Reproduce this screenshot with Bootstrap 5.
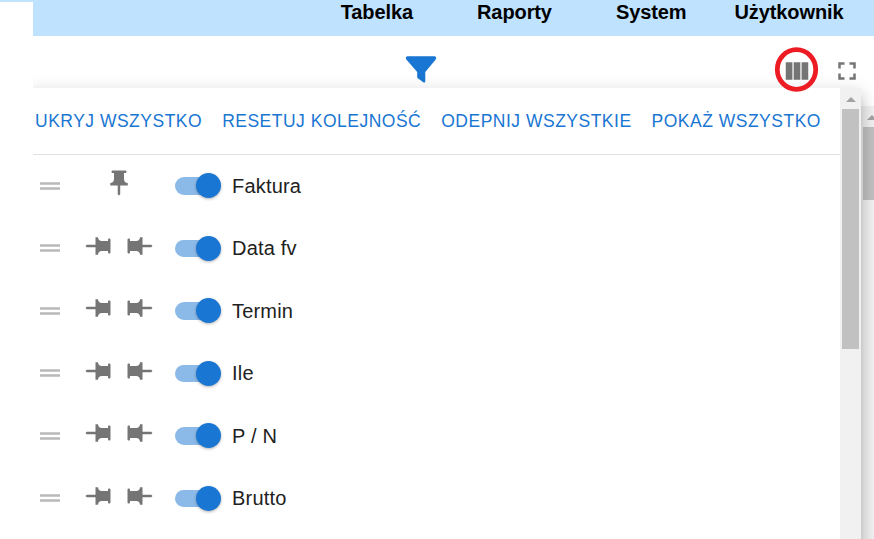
<!DOCTYPE html>
<html lang="pl">
<head>
<meta charset="utf-8">
<meta name="viewport" content="width=device-width, initial-scale=1">
<title>Tabelka</title>
<link href="https://cdn.jsdelivr.net/npm/bootstrap@5.3.0/dist/css/bootstrap.min.css" rel="stylesheet">
<style>
body{font-family:"Liberation Sans",Arial,sans-serif;font-size:20px;color:#212121;height:539px;background:#fff}
.side{width:33px;border-top:2px solid #bfe2ff}
.topnav{height:36px;background:#bfe2ff;padding-right:30.5px;gap:64px}
.topnav .nav-link{color:#000;font-weight:700;line-height:24px;padding:0;letter-spacing:-.1px}
.topnav .nav-link:last-child{margin-left:-16px}
.tools{height:52px;padding:9px 12px 0 0}
.tools svg{display:block}
.ic{width:30px;height:30px;fill:#757575;display:block;flex:none}
.funnel{margin-right:345.5px;margin-top:10px}
.tool-btn{margin-top:11px}
.columns-btn{margin-right:20px}
.outer-bar{top:106px;right:0;bottom:0;width:13px;background:#f1f1f1;overflow:hidden;padding-left:2px}
.outer-thumb{height:73px;background:#c1c1c1;margin-top:7px}
.arrow{width:0;height:0;border:5px solid transparent;border-top:0;border-bottom:5px solid #a3a3a3;margin-top:9px}
.outer-bar .arrow{margin-left:4px}
.menu-panel{left:-10px;top:88px;width:838px;height:600px;background:#fff;z-index:2;box-shadow:0 6px 6px -4px rgba(0,0,0,.2),0 10px 12.5px 1px rgba(0,0,0,.14),0 4px 17.5px 2.5px rgba(0,0,0,.12)}
.acts{height:67px;border-bottom:1px solid #e0e0e0;padding-left:2px}
.acts .btn{--bs-btn-padding-x:10px;--bs-btn-padding-y:7px;--bs-btn-font-size:17.5px;--bs-btn-color:#1976d2;--bs-btn-hover-color:#1976d2;--bs-btn-border-width:0;letter-spacing:.5px;white-space:nowrap}
.rows{margin-top:-.6px}
.line-item{height:62.5px;padding-left:12px}
.grip{opacity:.5;margin-right:18px}
.pins{width:72px;gap:11.5px;margin-right:19.5px;margin-top:-5px}
.toggle{width:46px;height:25px;margin-right:11.5px}
.toggle::before{content:"";position:absolute;left:0;top:4px;width:42.5px;height:17.5px;border-radius:9px;background:#8cbae8}
.toggle::after{content:"";position:absolute;right:0;top:0;width:25px;height:25px;border-radius:50%;background:#1976d2;box-shadow:0 1px 3px rgba(0,0,0,.3)}
.inner-bar{width:21px;background:#f1f1f1}
.inner-thumb{width:17px;height:240px;background:#c1c1c1;margin-top:7px}
.ttl{letter-spacing:.19px}
.ring{left:741px;top:46px;z-index:5;pointer-events:none}
</style>
</head>
<body class="d-flex overflow-hidden">
<svg class="d-none" aria-hidden="true">
<symbol id="pin" viewBox="0 0 24 24"><path d="M16 9V4h1c.55 0 1-.45 1-1s-.45-1-1-1H7c-.55 0-1 .45-1 1s.45 1 1 1h1v5c0 1.66-1.34 3-3 3v2h5.97v7l1 1 1-1v-7H19v-2c-1.66 0-3-1.34-3-3z"/></symbol>
<symbol id="drag" viewBox="0 0 24 24"><path d="M20 9H4v2h16V9zM4 15h16v-2H4v2z"/></symbol>
</svg>
<aside class="side flex-shrink-0"></aside>
<main class="flex-grow-1 position-relative overflow-hidden">
<nav class="nav topnav justify-content-end flex-nowrap">
<a class="nav-link" href="#">Tabelka</a><a class="nav-link" href="#">Raporty</a><a class="nav-link" href="#">System</a><a class="nav-link" href="#">Użytkownik</a>
</nav>
<div class="tools d-flex justify-content-end align-items-start">
<svg class="funnel" width="32" height="28" viewBox="0 0 32 28"><path fill="#1976d2" d="M2.7 1.3h26.6c1.7 0 2.5 1.8 1.4 3.1L20.3 17v9.2c0 1.2-1.1 1.7-2 1.1l-5.5-4.1c-.4-.3-.6-.7-.6-1.2v-5L1.3 4.4C.2 3.1 1 1.3 2.7 1.3z"/></svg>
<svg class="ic tool-btn columns-btn" viewBox="0 0 24 24"><path d="M14.67 5v14H9.33V5h5.34zm1 14H21V5h-5.33v14zm-7.34 0V5H3v14h5.33z"/></svg>
<svg class="ic tool-btn" viewBox="0 0 24 24"><path d="M7 14H5v5h5v-2H7v-3zm-2-4h2V7h3V5H5v5zm12 7h-3v2h5v-5h-2v3zM14 5v2h3v3h2V5h-5z"/></svg>
</div>
<div class="outer-bar position-absolute"><div class="arrow"></div><div class="outer-thumb"></div></div>
<div class="menu-panel position-absolute d-flex">
<div class="flex-grow-1">
<div class="acts d-flex align-items-center">
<button class="btn">UKRYJ WSZYSTKO</button><button class="btn">RESETUJ KOLEJNOŚĆ</button><button class="btn">ODEPNIJ WSZYSTKIE</button><button class="btn">POKAŻ WSZYSTKO</button>
</div>
<div id="rows" class="rows"></div>
</div>
<div class="inner-bar d-flex flex-column align-items-center"><div class="arrow"></div><div class="inner-thumb"></div></div>
</div>
<svg class="ring position-absolute" width="46" height="48" viewBox="0 0 46 48"><ellipse cx="22.5" cy="23.5" rx="19.2" ry="19.8" fill="none" stroke="#ed1c24" stroke-width="4.8"/></svg>
</main>
<script>
const pin = deg => `<svg class="ic" viewBox="0 0 24 24"><use href="#pin" transform="rotate(${deg} 12 12)"/></svg>`;
document.getElementById('rows').innerHTML = ['Faktura', 'Data fv', 'Termin', 'Ile', 'P / N', 'Brutto'].map((t, i) => `
<div class="line-item d-flex align-items-center">
<svg class="ic grip" viewBox="0 0 24 24"><use href="#drag"/></svg>
<div class="pins d-flex justify-content-center">${i ? pin(90) + pin(-90) : pin(0)}</div>
<span class="toggle position-relative"></span><span class="ttl">${t}</span>
</div>`).join('');
</script>
<script src="https://cdn.jsdelivr.net/npm/bootstrap@5.3.0/dist/js/bootstrap.bundle.min.js"></script>
</body>
</html>
